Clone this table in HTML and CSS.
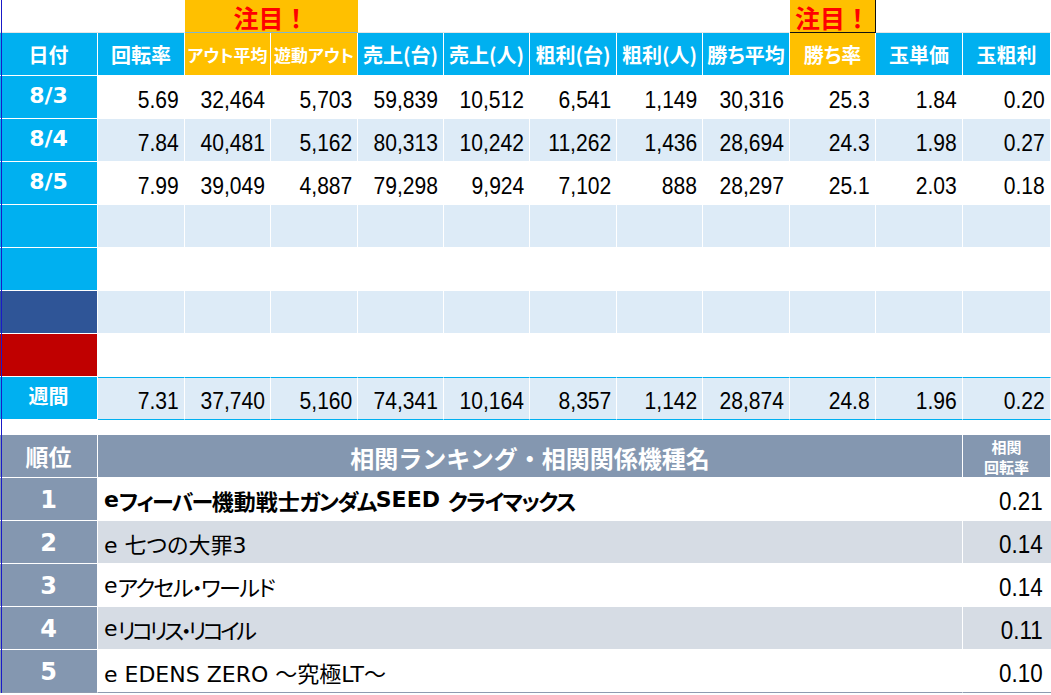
FILE: index.html
```html
<!DOCTYPE html>
<html lang="ja">
<head>
<meta charset="utf-8">
<title>相関ランキング</title>
<link rel="stylesheet" href="styles.css">
</head>
<body>
<div class="sheet">
  <div class="row top">
    <div class="c span2"></div>
    <div class="c span2 focus">注目！</div>
    <div class="c span5"></div>
    <div class="c focus focus-edge">注目！</div>
    <div class="c span2"></div>
  </div>
  <div class="row head">
    <div class="c">日付</div>
    <div class="c">回転率</div>
    <div class="c orange small">アウト平均</div>
    <div class="c orange small">遊動アウト</div>
    <div class="c">売上(台)</div>
    <div class="c">売上(人)</div>
    <div class="c">粗利(台)</div>
    <div class="c">粗利(人)</div>
    <div class="c">勝ち平均</div>
    <div class="c orange">勝ち率</div>
    <div class="c">玉単価</div>
    <div class="c">玉粗利</div>
  </div>
  <div class="row data">
    <div class="c date">8/3</div>
    <div class="c n"><span>5.69</span></div><div class="c n"><span>32,464</span></div><div class="c n"><span>5,703</span></div><div class="c n"><span>59,839</span></div><div class="c n"><span>10,512</span></div><div class="c n"><span>6,541</span></div><div class="c n"><span>1,149</span></div><div class="c n"><span>30,316</span></div><div class="c n"><span>25.3</span></div><div class="c n"><span>1.84</span></div><div class="c n"><span>0.20</span></div>
  </div>
  <div class="row data alt">
    <div class="c date">8/4</div>
    <div class="c n"><span>7.84</span></div><div class="c n"><span>40,481</span></div><div class="c n"><span>5,162</span></div><div class="c n"><span>80,313</span></div><div class="c n"><span>10,242</span></div><div class="c n"><span>11,262</span></div><div class="c n"><span>1,436</span></div><div class="c n"><span>28,694</span></div><div class="c n"><span>24.3</span></div><div class="c n"><span>1.98</span></div><div class="c n"><span>0.27</span></div>
  </div>
  <div class="row data">
    <div class="c date">8/5</div>
    <div class="c n"><span>7.99</span></div><div class="c n"><span>39,049</span></div><div class="c n"><span>4,887</span></div><div class="c n"><span>79,298</span></div><div class="c n"><span>9,924</span></div><div class="c n"><span>7,102</span></div><div class="c n"><span>888</span></div><div class="c n"><span>28,297</span></div><div class="c n"><span>25.1</span></div><div class="c n"><span>2.03</span></div><div class="c n"><span>0.18</span></div>
  </div>
  <div class="row data alt">
    <div class="c date"></div>
    <div class="c n"></div><div class="c n"></div><div class="c n"></div><div class="c n"></div><div class="c n"></div><div class="c n"></div><div class="c n"></div><div class="c n"></div><div class="c n"></div><div class="c n"></div><div class="c n"></div>
  </div>
  <div class="row data">
    <div class="c date"></div>
    <div class="c n"></div><div class="c n"></div><div class="c n"></div><div class="c n"></div><div class="c n"></div><div class="c n"></div><div class="c n"></div><div class="c n"></div><div class="c n"></div><div class="c n"></div><div class="c n"></div>
  </div>
  <div class="row data alt">
    <div class="c date navy"></div>
    <div class="c n"></div><div class="c n"></div><div class="c n"></div><div class="c n"></div><div class="c n"></div><div class="c n"></div><div class="c n"></div><div class="c n"></div><div class="c n"></div><div class="c n"></div><div class="c n"></div>
  </div>
  <div class="row data">
    <div class="c date crimson"></div>
    <div class="c n"></div><div class="c n"></div><div class="c n"></div><div class="c n"></div><div class="c n"></div><div class="c n"></div><div class="c n"></div><div class="c n"></div><div class="c n"></div><div class="c n"></div><div class="c n"></div>
  </div>
  <div class="row data alt week">
    <div class="c date wk">週間</div>
    <div class="c n"><span>7.31</span></div><div class="c n"><span>37,740</span></div><div class="c n"><span>5,160</span></div><div class="c n"><span>74,341</span></div><div class="c n"><span>10,164</span></div><div class="c n"><span>8,357</span></div><div class="c n"><span>1,142</span></div><div class="c n"><span>28,874</span></div><div class="c n"><span>24.8</span></div><div class="c n"><span>1.96</span></div><div class="c n"><span>0.22</span></div>
  </div>

  <div class="spacer"></div>

  <div class="rrow rhead">
    <div class="c">順位</div>
    <div class="c title">相関ランキング・相関関係機種名</div>
    <div class="c sub"><span>相関</span><span>回転率</span></div>
  </div>
  <div class="rrow">
    <div class="c rank">1</div>
    <div class="c name strong">e<span class="kana">フィーバー</span>機動戦士<span class="kana">ガンダム</span>SEED<span class="kana gap">クライマックス</span></div>
    <div class="c val"><span>0.21</span></div>
  </div>
  <div class="rrow shade">
    <div class="c rank">2</div>
    <div class="c name">e 七つの大罪3</div>
    <div class="c val"><span>0.14</span></div>
  </div>
  <div class="rrow">
    <div class="c rank">3</div>
    <div class="c name">e<span class="kana">アクセル・ワールド</span></div>
    <div class="c val"><span>0.14</span></div>
  </div>
  <div class="rrow shade">
    <div class="c rank">4</div>
    <div class="c name">e<span class="kana tight">リコリス・リコイル</span></div>
    <div class="c val"><span>0.11</span></div>
  </div>
  <div class="rrow last">
    <div class="c rank">5</div>
    <div class="c name">e EDENS ZERO ～究極LT～</div>
    <div class="c val"><span>0.10</span></div>
  </div>
</div>
</body>
</html>
```
FILE: styles.css
```css
* { box-sizing: border-box; }
html, body { margin: 0; padding: 0; background: #fff; }
body {
  width: 1051px;
  height: 695px;
  overflow: hidden;
  font-family: "Noto Sans CJK JP", "Liberation Sans", sans-serif;
}
.sheet {
  position: relative;
  width: 1051px;
}
.sheet::after {
  content: "";
  position: absolute;
  left: 1px;
  top: 0;
  bottom: 0;
  width: 1px;
  background: #1a1ac8;
}

.row {
  display: grid;
  grid-template-columns: 98px 87px 86px 87px 86px 86px 87px 86px 87px 86px 87px 88px;
  height: 43px;
}
.c {
  display: flex;
  align-items: center;
  justify-content: center;
  border-right: 1px solid #fff;
  border-bottom: 1px solid #fff;
  white-space: nowrap;
  overflow: hidden;
}

/* top "attention" row */
.row.top { height: 33px; }
.row.top .c { border-color: transparent; border-bottom: 1px solid #e6e6e6; }
.span2 { grid-column: span 2; }
.span5 { grid-column: span 5; }
.row.top .focus {
  background: #ffc000;
  color: #ff0000;
  font-weight: 700;
  font-size: 25px;
  border-bottom: 1px solid #7fb6d0;
  padding-top: 1px;
}
.row.top .focus-edge {
  border-right: 1px solid #111;
  border-bottom: 1px solid #111;
}

/* header row */
.row.head .c {
  background: #00b0f0;
  color: #fff;
  font-weight: 700;
  font-size: 20px;
  font-feature-settings: "palt";
  padding-top: 1px;
}
.row.head .c.orange { background: #ffc000; }
.row.head .c.small { font-size: 17px; }

/* data rows */
.row.data .c { background: #fff; }
.row.data.alt .c { background: #ddebf7; }
.row.data .c.n {
  justify-content: flex-end;
  padding-right: 5px;
  padding-top: 5px;
  font-family: "Liberation Sans", Arial, sans-serif;
  font-size: 24.5px;
  color: #000;
}
.c.n span,
.c.val span {
  display: inline-block;
  transform: scaleX(0.86);
  transform-origin: right center;
}
.row.data .c.date,
.row.data.alt .c.date {
  background: #00b0f0;
  color: #fff;
  font-family: "DejaVu Sans", "Liberation Sans", sans-serif;
  font-weight: 700;
  font-size: 22px;
  padding-bottom: 4px;
}
.row.data .c.date.navy { background: #2f5597; }
.row.data .c.date.crimson { background: #c00000; }
.row.data .c.date.wk {
  font-family: "Noto Sans CJK JP", sans-serif;
  font-size: 20px;
  padding-bottom: 5px;
}
.row.week .c.n {
  border-top: 1px solid #00b0f0;
  border-bottom: 1px solid #00b0f0;
}

.spacer { height: 15px; }

/* ranking table */
.rrow {
  display: grid;
  grid-template-columns: 98px 865px 88px;
  height: 43px;
}
.rrow .c { background: #fff; }
.rrow.shade .c { background: #d6dce4; }
.rrow.rhead .c {
  background: #8497b0;
  color: #fff;
  font-weight: 700;
  font-size: 23px;
}
.rrow.rhead .c.title { font-size: 24px; padding-top: 2px; }
.rrow.rhead .c.sub {
  flex-direction: column;
  font-size: 15px;
  line-height: 20px;
  padding-top: 1px;
}
.rrow .c.rank,
.rrow.shade .c.rank {
  background: #8497b0;
  color: #fff;
  font-family: "DejaVu Sans", "Liberation Sans", sans-serif;
  font-weight: 700;
  font-size: 24px;
  padding-top: 1px;
}
.rrow .c.name {
  justify-content: flex-start;
  padding-left: 6px;
  font-family: "DejaVu Sans", "Noto Sans CJK JP", sans-serif;
  font-feature-settings: "palt";
  font-size: 22px;
  color: #000;
  padding-top: 1px;
}
.rrow .c.name .kana { letter-spacing: -1.6px; }
.rrow .c.name .kana.gap { margin-left: 8px; }
.rrow .c.name .kana.tight { letter-spacing: -3.4px; }
.rrow .c.name.strong { font-weight: 700; }
.rrow .c.val {
  justify-content: flex-end;
  padding-right: 8px;
  padding-top: 4px;
  font-family: "Liberation Sans", Arial, sans-serif;
  font-size: 26px;
  color: #000;
  border-right: none;
}
.rrow.last .c { border-bottom: 1px solid #8e9bb0; }
```
